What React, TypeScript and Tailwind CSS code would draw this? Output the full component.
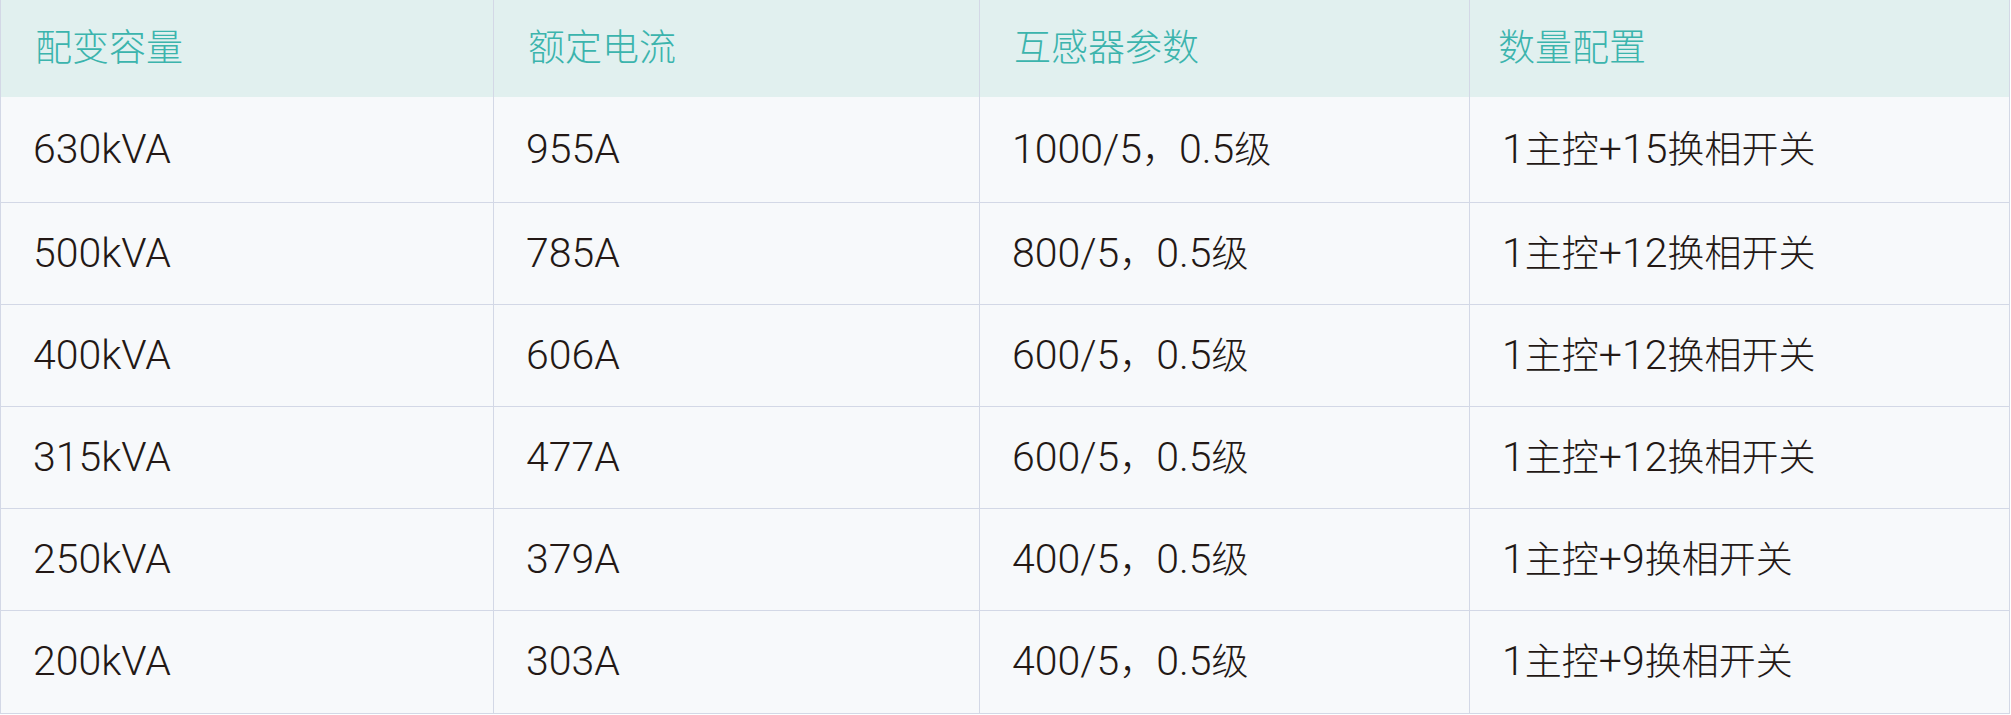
const headers = ['配变容量', '额定电流', '互感器参数', '数量配置']

const rows = [
  { h: 'h-[106px]', cells: ['630kVA', '955A', '1000/5，0.5级', '1主控+15换相开关'] },
  { h: 'h-[102px]', cells: ['500kVA', '785A', '800/5，0.5级', '1主控+12换相开关'] },
  { h: 'h-[102px]', cells: ['400kVA', '606A', '600/5，0.5级', '1主控+12换相开关'] },
  { h: 'h-[102px]', cells: ['315kVA', '477A', '600/5，0.5级', '1主控+12换相开关'] },
  { h: 'h-[102px]', cells: ['250kVA', '379A', '400/5，0.5级', '1主控+9换相开关'] },
  { h: 'h-[103px]', cells: ['200kVA', '303A', '400/5，0.5级', '1主控+9换相开关'] },
]

const cols = 'grid grid-cols-[493px_486px_490px_1fr]'
const font = { fontFamily: 'Roboto, "Noto Sans CJK SC", sans-serif' }

// latin runs a touch larger than the han glyphs, like the original artwork
function Mixed({ text }: { text: string }) {
  const parts = text.split(/([\u4e00-\u9fff\uff0c]+)/).filter(Boolean)
  return (
    <span>
      {parts.map((p, i) =>
        /[\u4e00-\u9fff\uff0c]/.test(p)
          ? <span key={i} className="text-[37px]">{p}</span>
          : <span key={i}>{p}</span>
      )}
    </span>
  )
}

export default function App() {
  return (
    <div className="w-[2011px] bg-white" style={font}>
      <div className="w-[2010px] border-x border-[#d3d8e6] bg-[#f7f9fb]">
        <div className={`${cols} h-[97px] bg-[#e1f0ef]`}>
          {headers.map((t, i) => (
            <div key={t} className={`flex items-center text-[37px] font-light text-[#3bb4ad] ${i < 3 ? 'pl-[34px] border-r border-[#d3d8e6]' : 'pl-[28px]'}`}>
              {t}
            </div>
          ))}
        </div>
        {rows.map((r) => (
          <div key={r.cells[0]} className={`${cols} ${r.h} border-b border-[#d3d8e6]`}>
            {r.cells.map((c, i) => (
              <div key={i} className={`flex items-center pl-8 text-[41px] font-light text-[#231815] ${i < 3 ? 'border-r border-[#d3d8e6]' : ''}`}>
                <Mixed text={c} />
              </div>
            ))}
          </div>
        ))}
      </div>
    </div>
  )
}
